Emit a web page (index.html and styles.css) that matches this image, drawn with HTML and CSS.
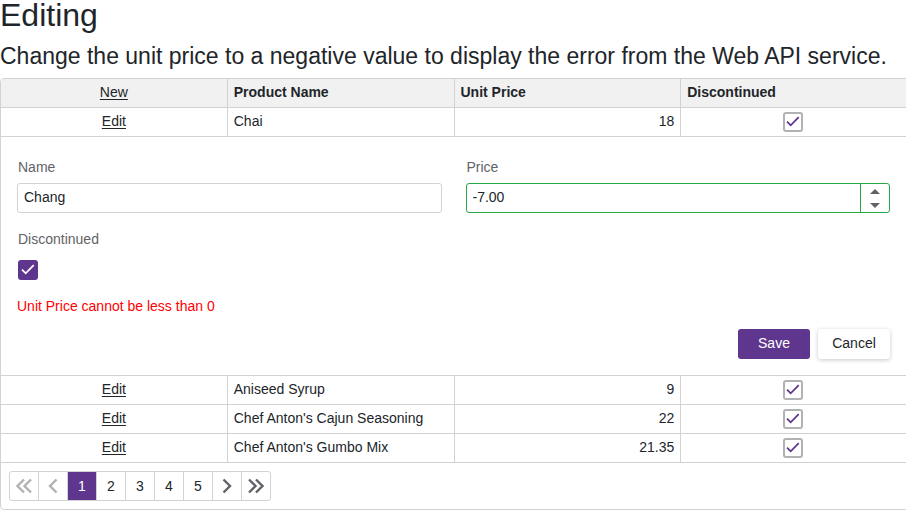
FILE: index.html
```html
<!DOCTYPE html>
<html lang="en">
<head>
<meta charset="utf-8">
<meta name="viewport" content="width=device-width, initial-scale=1">
<title>Editing</title>
<link rel="stylesheet" href="styles.css">
</head>
<body>
<svg class="symbols">
  <symbol id="check" viewBox="0 0 20 20"><path d="M4 9.600l3.700 3.700L15.700 5.200" fill="none" stroke="currentColor" stroke-width="1.800"/></symbol>
  <symbol id="next" viewBox="0 0 28 28"><path d="M10.500 7.500l6.500 6.500-6.500 6.500" fill="none" stroke="currentColor" stroke-width="2.400"/></symbol>
  <symbol id="last" viewBox="0 0 28 28"><path d="M7 7.500l6.500 6.500L7 20.500M14 7.500l6.500 6.500L14 20.500" fill="none" stroke="currentColor" stroke-width="2.400"/></symbol>
</svg>
<main class="page">
  <h1 class="title">Editing</h1>
  <h2 class="subtitle">Change the unit price to a negative value to display the error from the Web API service.</h2>
  <div class="grid">
    <table class="table">
      <thead>
        <tr><th class="command"><a href="#new">New</a></th><th>Product Name</th><th>Unit Price</th><th>Discontinued</th></tr>
      </thead>
      <tbody>
        <tr>
          <td class="command"><a href="#edit-chai">Edit</a></td><td>Chai</td><td class="number">18</td>
          <td class="flag"><span class="check"><input type="checkbox" checked disabled aria-label="Chai discontinued"><svg><use href="#check"/></svg></span></td>
        </tr>
        <tr>
          <td class="edit-cell" colspan="4">
            <form class="form">
              <div class="fields">
                <div class="field">
                  <label for="name">Name</label>
                  <input class="textbox" id="name" type="text" value="Chang">
                </div>
                <div class="field">
                  <label for="price">Price</label>
                  <div class="textbox spin">
                    <input id="price" type="text" inputmode="decimal" value="-7.00">
                    <div class="spin-buttons">
                      <button type="button" aria-label="Increase"><svg class="arrow" viewBox="0 0 10 5"><path d="M0 5L5 0l5 5z"/></svg></button>
                      <button type="button" aria-label="Decrease"><svg class="arrow" viewBox="0 0 10 5"><path d="M0 0l5 5 5-5z"/></svg></button>
                    </div>
                  </div>
                </div>
                <div class="field">
                  <label for="discontinued">Discontinued</label>
                  <div class="check-row"><span class="check solid"><input id="discontinued" type="checkbox" checked><svg><use href="#check"/></svg></span></div>
                </div>
              </div>
              <p class="error">Unit Price cannot be less than 0</p>
              <div class="actions">
                <button class="button primary" type="submit">Save</button>
                <button class="button" type="button">Cancel</button>
              </div>
            </form>
          </td>
        </tr>
        <tr>
          <td class="command"><a href="#edit-aniseed">Edit</a></td><td>Aniseed Syrup</td><td class="number">9</td>
          <td class="flag"><span class="check"><input type="checkbox" checked disabled aria-label="Aniseed Syrup discontinued"><svg><use href="#check"/></svg></span></td>
        </tr>
        <tr>
          <td class="command"><a href="#edit-cajun">Edit</a></td><td>Chef Anton's Cajun Seasoning</td><td class="number">22</td>
          <td class="flag"><span class="check"><input type="checkbox" checked disabled aria-label="Chef Anton's Cajun Seasoning discontinued"><svg><use href="#check"/></svg></span></td>
        </tr>
        <tr>
          <td class="command"><a href="#edit-gumbo">Edit</a></td><td>Chef Anton's Gumbo Mix</td><td class="number">21.35</td>
          <td class="flag"><span class="check"><input type="checkbox" checked disabled aria-label="Chef Anton's Gumbo Mix discontinued"><svg><use href="#check"/></svg></span></td>
        </tr>
      </tbody>
    </table>
    <nav class="footer" aria-label="Pages">
      <div class="pager">
        <button type="button" disabled aria-label="First page"><svg class="flip"><use href="#last"/></svg></button>
        <button type="button" disabled aria-label="Previous page"><svg class="flip"><use href="#next"/></svg></button>
        <button type="button" class="current" aria-current="page">1</button>
        <button type="button">2</button>
        <button type="button">3</button>
        <button type="button">4</button>
        <button type="button">5</button>
        <button type="button" aria-label="Next page"><svg><use href="#next"/></svg></button>
        <button type="button" aria-label="Last page"><svg><use href="#last"/></svg></button>
      </div>
    </nav>
  </div>
</main>
</body>
</html>
```
FILE: styles.css
```css
:root {
  --accent: #5f368d;
  --line: #d2d2d2;
  --text: #212529;
  --icon: #5f6368;
}

* { box-sizing: border-box; }

body {
  margin: 0;
  background: #fff;
  color: var(--text);
  font: 14px/20px "Liberation Sans", Arial, sans-serif;
}

button, input { font: inherit; color: inherit; }
button { cursor: pointer; }

.symbols { display: none; }

.page { overflow: hidden; }

.title {
  margin: 0 0 12px;
  font-size: 32px;
  line-height: 30px;
  font-weight: 400;
}

.subtitle {
  margin: 0 0 8px;
  font-size: 23px;
  line-height: 28px;
  font-weight: 400;
  white-space: nowrap;
}

/* The grid's right border bleeds past the page edge. */
.grid {
  margin-right: -3px;
  border: 1px solid var(--line);
  border-radius: 4px;
  overflow: hidden;
}

.table {
  width: 100%;
  table-layout: fixed;
  border-collapse: separate;
  border-spacing: 0;
}

th, td {
  height: 29px;
  padding: 3px 6px 5px;
  border-right: 1px solid var(--line);
  border-bottom: 1px solid var(--line);
  text-align: left;
}

th:last-child, td:last-child { border-right: 0; }
th { background: #f1f1f1; font-weight: 700; }
.command { font-weight: 400; text-align: center; }
.command a { color: inherit; text-underline-offset: 2px; }
.number { text-align: right; }
.flag { padding: 4px 8px 4px 4px; }

.check {
  display: grid;
  width: 20px;
  height: 20px;
  margin: 0 auto;
  color: var(--accent);
}

.check > * { grid-area: 1 / 1; width: 20px; height: 20px; }
.check svg { pointer-events: none; }

.check input {
  appearance: none;
  margin: 0;
  border: 2px solid #b2b2b2;
  border-radius: 3px;
}

.solid { margin: 0 1px; color: #fff; }
.solid input { border-color: var(--accent); background: var(--accent); }

.edit-cell { padding: 20px 18px 16px 16px; }

.fields {
  display: grid;
  grid-template-columns: 1fr 1fr;
  gap: 16px 24px;
}

.field {
  display: flex;
  flex-direction: column;
  gap: 6px;
}

.field label { padding-left: 1px; color: var(--icon); }

.textbox {
  width: 100%;
  height: 30px;
  padding: 3px 6px 5px;
  border: 1px solid var(--line);
  border-radius: 3px;
}

.spin { display: flex; padding: 0; border-color: #28a745; }

.spin input {
  flex: 1;
  min-width: 0;
  padding: 3px 6px 5px;
  border: 0;
  background: none;
}

.spin-buttons {
  display: flex;
  flex-direction: column;
  width: 29px;
  border-left: 1px solid #28a745;
}

.spin-buttons button {
  flex: 1;
  display: grid;
  place-items: center;
  padding: 0;
  border: 0;
  background: none;
}

.arrow { width: 10px; height: 5px; fill: var(--icon); }

.check-row { display: flex; align-items: center; height: 30px; }

.error { margin: 11px 0 13px; color: #f00; }

.actions { display: flex; justify-content: flex-end; gap: 8px; }

.button {
  width: 72px;
  height: 30px;
  padding: 0 0 2px;
  border: 0;
  border-radius: 3px;
  background: #fff;
  box-shadow: 0 1px 4px rgba(0, 0, 0, .22);
}

.primary {
  background: var(--accent);
  color: #fff;
  box-shadow: none;
}

.footer { padding: 8px; }

.pager {
  display: flex;
  width: max-content;
  border: 1px solid var(--line);
  border-radius: 3px;
}

.pager button {
  width: 29px;
  height: 28px;
  padding: 0;
  border: 0;
  border-right: 1px solid var(--line);
  background: none;
}

.pager button:last-child { width: 28px; border-right: 0; }
.pager .current { background: var(--accent); color: #fff; }
.pager svg { display: block; width: 28px; height: 28px; color: var(--icon); }
.pager button:disabled svg { color: #b0b1b3; }
.flip { transform: scaleX(-1); }
```
